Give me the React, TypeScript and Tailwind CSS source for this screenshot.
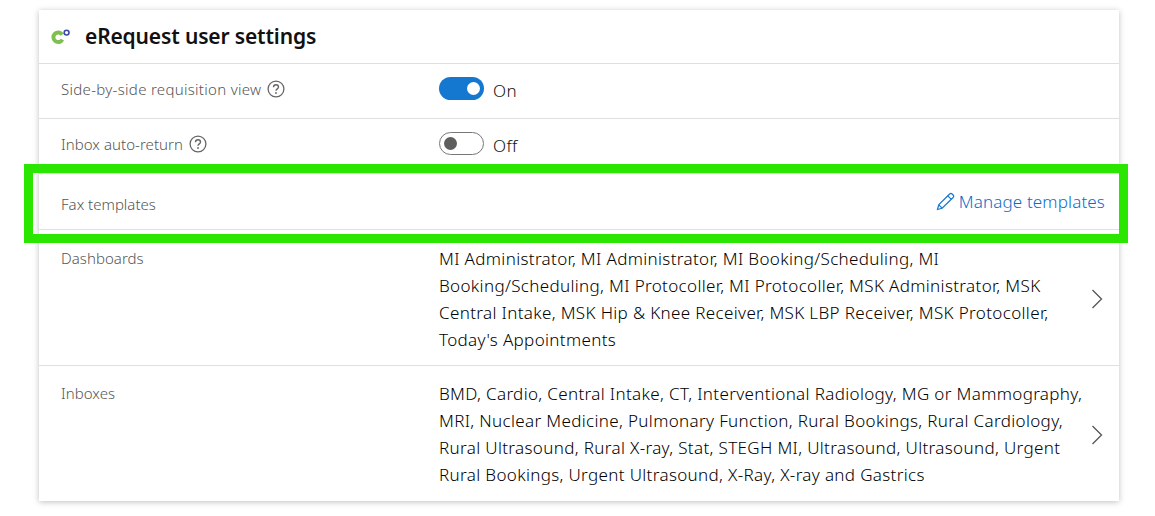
const dashboards =
  "MI Administrator, MI Administrator, MI Booking/Scheduling, MI Booking/Scheduling, MI Protocoller, MI Protocoller, MSK Administrator, MSK Central Intake, MSK Hip & Knee Receiver, MSK LBP Receiver, MSK Protocoller, Today's Appointments";
const inboxes =
  "BMD, Cardio, Central Intake, CT, Interventional Radiology, MG or Mammography, MRI, Nuclear Medicine, Pulmonary Function, Rural Bookings, Rural Cardiology, Rural Ultrasound, Rural X-ray, Stat, STEGH MI, Ultrasound, Ultrasound, Urgent Rural Bookings, Urgent Ultrasound, X-Ray, X-ray and Gastrics";

function HelpIcon() {
  return (
    <svg width="18" height="18" viewBox="0 0 18 18" fill="none" className="shrink-0">
      <circle cx="9" cy="9" r="7.9" stroke="#666" strokeWidth="1.3" />
      <path d="M6.5 7.2c0-1.5 1.1-2.4 2.5-2.4s2.5.9 2.5 2.2c0 1.9-2.5 1.9-2.5 3.8" stroke="#666" strokeWidth="1.4" />
      <circle cx="9" cy="13" r="0.9" fill="#666" />
    </svg>
  );
}

function Chevron() {
  return (
    <svg width="12" height="20" viewBox="0 0 12 20" fill="none" className="shrink-0">
      <path d="M1.5 1l9 9-9 9" stroke="#555" strokeWidth="1.3" />
    </svg>
  );
}

function Logo() {
  return (
    <svg width="20" height="16" viewBox="0 0 20 16" fill="none">
      <path d="M11.2 5.6A4.8 4.8 0 1 0 11.4 10.6" stroke="#7ebf50" strokeWidth="4" />
      <circle cx="15.6" cy="3.6" r="2.4" stroke="#3a4aa8" strokeWidth="1.6" />
    </svg>
  );
}

function ListRow({ label, text, className, chevron }: { label: string; text: string; className: string; chevron: string }) {
  return (
    <div className={"flex border-b border-[#dfdfdf] pl-[22px] " + className}>
      <div className="mt-[3px] w-[378px] shrink-0 text-[15px] leading-[20px] font-light tracking-[0.05px] text-[#555]">{label}</div>
      <div className="w-[648px] shrink-0 text-[17px] leading-[27px] font-light tracking-[0.35px] text-black">{text}</div>
      <div className={"flex flex-1 items-start pl-[4px] " + chevron}>
        <Chevron />
      </div>
    </div>
  );
}

export default function App() {
  return (
    <div className="relative h-[516px] w-[1155px] overflow-hidden bg-white font-['Noto_Sans','Open_Sans',sans-serif]">
      <div className="ml-[39px] mt-[10px] w-[1080px] bg-white shadow-[0_1px_6px_rgba(0,0,0,0.25)]">
        <div className="flex h-[54px] items-center gap-[14px] border-b border-[#dfdfdf] pl-[12px]">
          <Logo />
          <h1 className="text-[21px] font-semibold tracking-[-0.15px] text-[#111]">eRequest user settings</h1>
        </div>

        <div className="flex h-[55px] items-center border-b border-[#dfdfdf] pb-[5px] pl-[22px]">
          <div className="mt-[1px] flex w-[378px] items-center gap-[6px] text-[15px] font-light tracking-[0.3px] text-[#555]">
            Side-by-side requisition view <HelpIcon />
          </div>
          <div className="flex h-[23px] w-[45px] items-center justify-end rounded-full bg-[#1477d0] pr-[4px]">
            <span className="h-[13px] w-[13px] rounded-full bg-white" />
          </div>
          <span className="ml-[9px] mt-[5px] text-[17px] font-light tracking-[0.4px] text-[#111]">On</span>
        </div>

        <div className="flex h-[55px] items-center border-b border-[#dfdfdf] pb-[5px] pl-[22px]">
          <div className="mt-[1px] flex w-[378px] items-center gap-[6px] text-[15px] font-light tracking-[0.05px] text-[#555]">
            Inbox auto-return <HelpIcon />
          </div>
          <div className="flex h-[23px] w-[45px] items-center rounded-full border border-[#777] pl-[4px]">
            <span className="h-[13px] w-[13px] rounded-full bg-[#605e5c]" />
          </div>
          <span className="ml-[9px] mt-[5px] text-[17px] font-light tracking-[0.4px] text-[#111]">Off</span>
        </div>

        <div className="flex h-[56px] items-center justify-between border-b border-[#dfdfdf] pl-[22px] pr-[14px]">
          <span className="mt-[6px] text-[15px] font-light text-[#555]">Fax templates</span>
          <a className="flex items-center gap-[4px] text-[17px] font-light tracking-[0.15px] text-[#0a6ccc]">
            <svg width="19" height="19" viewBox="0 0 19 19" fill="none">
              <path d="M1.5 17.5l1.2-4.6L13.6 2a1.8 1.8 0 0 1 2.5 0l1 1a1.8 1.8 0 0 1 0 2.5L6.1 16.3z" stroke="#1477d0" strokeWidth="1.2" />
              <path d="M11.8 3.8l3.5 3.5M2.8 12.9l3.3 3.3" stroke="#1477d0" strokeWidth="1.2" />
            </svg>
            Manage templates
          </a>
        </div>

        <ListRow label="Dashboards" text={dashboards} className="h-[136px] pt-[15px]" chevron="pt-[44px]" />
        <ListRow label="Inboxes" text={inboxes} className="h-[135px] border-b-0 pt-[14px]" chevron="pt-[45px]" />
      </div>

      <div className="absolute left-[24px] top-[164px] h-[79px] w-[1104px] border-[9px] border-[#2ae600]" />
    </div>
  );
}
